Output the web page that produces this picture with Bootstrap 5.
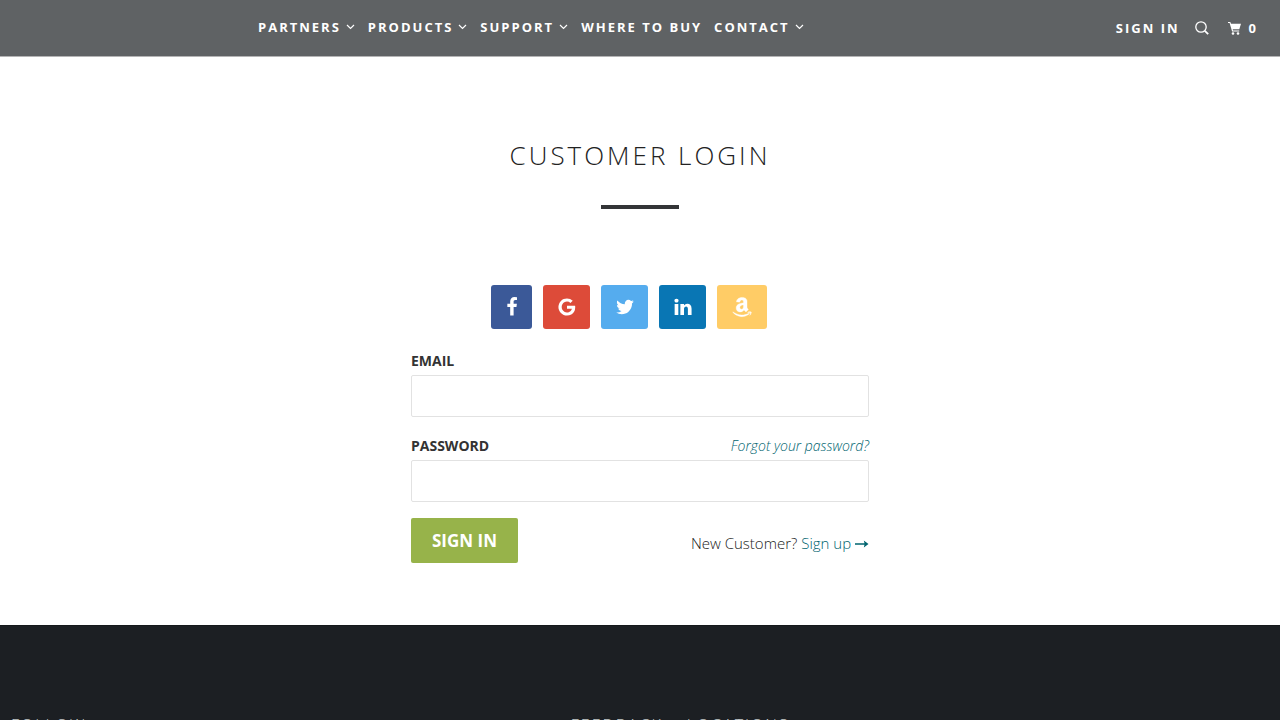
<!DOCTYPE html>
<html lang="en">
<head>
<meta charset="utf-8">
<meta name="viewport" content="width=device-width, initial-scale=1">
<title>Customer Login</title>
<link href="https://cdn.jsdelivr.net/npm/bootstrap@5.3.0/dist/css/bootstrap.min.css" rel="stylesheet">
<style>
  body { font-family: "Open Sans", sans-serif; font-size: 15px; line-height: 24px; color: #333; background: #fff; }
  a { text-decoration: none; }
  .topbar { min-height: 57px; background: #5f6264; border-bottom: 1px solid #b4b4b5; padding: 0 22px 0 20%; }
  .topbar a { color: #fff; font-size: 13px; line-height: 20px; font-weight: 700; letter-spacing: 2px; }
  .main-links { gap: 12px; padding: 0 0 2px 2px; }
  .main-links svg { margin: 0 1px 0 5px; }
  .tools { gap: 15px; }
  .page-title { font-size: 26px; line-height: 36px; font-weight: 300; letter-spacing: 3px; margin: 0; color: #222; }
  .title-rule { width: 78px; height: 4px; background: #333537; opacity: 1; border: 0; margin: 32px auto 76px; }
  .login-main { padding: 80px 16px 62px; }
  .login-form { max-width: 458px; }
  .social { gap: 11px; padding-right: 22px; margin-bottom: 20px; }
  .social-btn { height: 44px; padding: 0; border-radius: 3px; color: #fff; border: 0; }
  .fb { background: #3b5998; width: 41px; }
  .gg { background: #dd4b39; width: 47px; }
  .tw { background: #55acee; width: 47px; }
  .li { background: #0976b4; width: 47px; }
  .az { background: #ffcc66; width: 50px; }
  .field-label { font-size: 14px; font-weight: 700; }
  .field-box { height: 42px; border: 1px solid #e2e2e2; border-radius: 2px; margin-top: 2px; }
  .email-box { margin-bottom: 17px; }
  .teal { color: #00646f; }
  .forgot { font-size: 14px; font-style: italic; font-weight: 300; }
  .signin { height: 45px; width: 107px; padding: 0; border: 0; border-radius: 2px; background: #97b34a; color: #fff; font-size: 17px; font-weight: 700; }
  .signup { font-weight: 300; color: #222; }
  .signup svg { vertical-align: 1px; }
  .site-footer { background: #1c1f23; border-top: 1px solid #15181b; padding: 89px 11px 60px; }
  .site-footer h2 { font-size: 16px; line-height: 20px; font-weight: 300; letter-spacing: 2px; color: #c4caca; margin: 0; }
  .follow-col { width: 44.5%; }
  .foot-cols { gap: 24px; }
</style>
</head>
<body>
<header class="topbar d-flex align-items-center justify-content-between">
  <nav class="main-links d-flex flex-wrap" aria-label="Main">
    <a href="#" class="d-flex align-items-center">PARTNERS <svg width="9" height="6" viewBox="0 0 9 6" fill="none" stroke="#fff" stroke-width="1.2"><path d="M1 1l3.500 3.500L8 1"/></svg></a>
    <a href="#" class="d-flex align-items-center">PRODUCTS <svg width="9" height="6" viewBox="0 0 9 6" fill="none" stroke="#fff" stroke-width="1.2"><path d="M1 1l3.500 3.500L8 1"/></svg></a>
    <a href="#" class="d-flex align-items-center">SUPPORT <svg width="9" height="6" viewBox="0 0 9 6" fill="none" stroke="#fff" stroke-width="1.2"><path d="M1 1l3.500 3.500L8 1"/></svg></a>
    <a href="#">WHERE TO BUY</a>
    <a href="#" class="d-flex align-items-center">CONTACT <svg width="9" height="6" viewBox="0 0 9 6" fill="none" stroke="#fff" stroke-width="1.2"><path d="M1 1l3.500 3.500L8 1"/></svg></a>
  </nav>
  <div class="tools d-flex align-items-center">
    <a href="#">SIGN IN</a>
    <a href="#" class="d-flex me-1" aria-label="Search"><svg width="14" height="14" viewBox="0 0 14 14" fill="none" stroke="#fff"><circle cx="6" cy="6" r="5.200" stroke-width="1.300"/><path d="M9.800 9.800l3.400 3.400" stroke-width="1.800"/></svg></a>
    <a href="#" class="d-flex align-items-center gap-2" aria-label="Cart, 0 items"><svg width="13" height="13" viewBox="0 0 13 13" fill="#fff"><path d="M0 0h2.300l.7 1.700H13L11.300 7.200H4.700l.3 1.200h6.200v1.100H4.100L1.600 1.100H0z"/><circle cx="5" cy="11.500" r="1.300"/><circle cx="10" cy="11.500" r="1.300"/></svg>0</a>
  </div>
</header>

<main class="login-main">
  <h1 class="page-title text-center">CUSTOMER LOGIN</h1>
  <hr class="title-rule">
  <form class="login-form mx-auto">
    <div class="social d-flex justify-content-center">
      <button type="button" class="social-btn fb d-flex align-items-center justify-content-center" aria-label="Facebook"><svg class="flex-shrink-0" width="20" height="20" viewBox="0 0 1792 1792" fill="currentColor"><path d="M1343 12v264h-157q-86 0-116 36t-30 108v189h293l-39 296h-254v759h-306v-759h-255v-296h255v-218q0-186 104-288.500t277-102.500q147 0 228 12z"/></svg></button>
      <button type="button" class="social-btn gg d-flex align-items-center justify-content-center" aria-label="Google"><svg class="flex-shrink-0" width="20" height="20" viewBox="0 0 1792 1792" fill="currentColor"><path d="M896 786h725q12 67 12 128 0 217-91 387.500t-259.500 266.500-386.500 96q-157 0-299-60.500t-245-163.500-163.500-245-60.500-299 60.500-299 163.500-245 245-163.500 299-60.500q300 0 515 201l-209 201q-123-119-306-119-129 0-238.500 65t-173.500 176.500-64 243.500 64 243.500 173.500 176.500 238.500 65q87 0 160-24t120-60 82-82 51.500-87 22.500-78h-436v-264z"/></svg></button>
      <button type="button" class="social-btn tw d-flex align-items-center justify-content-center" aria-label="Twitter"><svg class="flex-shrink-0" width="20" height="20" viewBox="0 0 1792 1792" fill="currentColor"><path d="M1684 408q-67 98-162 167 1 14 1 42 0 130-38 259.500t-115.500 248.500-184.500 210.500-258 146-323 54.500q-271 0-496-145 35 4 78 4 225 0 401-138-105-2-188-64.500t-114-159.500q33 5 61 5 43 0 85-11-112-23-185.500-111.500t-73.500-205.500v-4q68 38 146 41-66-44-105-115t-39-154q0-88 44-163 121 149 294.500 238.500t371.500 99.500q-8-38-8-74 0-134 94.500-228.500t228.500-94.500q140 0 236 102 109-21 205-78-37 115-142 178 93-10 186-50z"/></svg></button>
      <button type="button" class="social-btn li d-flex align-items-center justify-content-center" aria-label="LinkedIn"><svg class="flex-shrink-0" width="20" height="20" viewBox="0 0 1792 1792" fill="currentColor"><path d="M477 625v991h-330v-991h330zm21-306q1 73-50.500 122t-135.500 49h-2q-82 0-132-49t-50-122q0-74 51.500-122.500t134.500-48.500 133 48.500 51 122.500zm1166 729v568h-329v-530q0-105-40.500-164.500t-126.500-59.500q-63 0-105.500 34.500t-63.500 85.500q-11 30-11 81v553h-329q2-399 2-647t-1-296l-1-48h329v144h-2q20-32 41-56t56.500-52 87-43.500 114.500-15.500q171 0 275 113.500t104 332.500z"/></svg></button>
      <button type="button" class="social-btn az d-flex align-items-center justify-content-center" aria-label="Amazon"><svg class="flex-shrink-0" width="20" height="22" viewBox="0 0 448 512" fill="currentColor" stroke="currentColor" stroke-width="8"><path d="M257.200 162.700c-48.700 1.800-169.500 15.500-169.500 117.500 0 109.500 138.300 114 183.500 43.200 6.500 10.200 35.400 37.500 45.300 46.800l56.800-56S341 288.900 341 261.400V114.300C341 89 316.500 32 228.700 32 140.700 32 94 87 94 136.300l73.500 6.800c16.300-49.500 54.200-49.500 54.200-49.500 40.700-.1 35.500 29.800 35.500 69.100zm0 86.800c0 80-84.200 68-84.200 17.200 0-47.200 50.500-56.700 84.200-57.800v40.600zm136 163.500c-7.700 10-70 67-174.500 67S34.200 408.500 9.700 379c-6.800-7.700 1-11.300 5.500-8.300C88.500 415.200 203 488.500 387.700 401c7.500-3.700 13.300 2 5.500 12zm39.800 2.200c-6.500 15.800-16 26.800-21.200 31-5.500 4.500-9.500 2.700-6.500-3.800s19.300-46.500 12.700-55c-6.500-8.300-37-4.300-48-3.200-10.800 1-13 2-14-.3-2.300-5.700 21.700-15.500 37.500-17.500 15.700-1.800 41-.8 46 5.700 3.700 5.100 0 27.100-6.500 43.100z"/></svg></button>
    </div>
    <label for="email" class="field-label d-block">EMAIL</label>
    <input type="email" id="email" class="field-box email-box form-control">
    <div class="d-flex justify-content-between">
      <label for="password" class="field-label">PASSWORD</label>
      <a href="#" class="teal forgot">Forgot your password?</a>
    </div>
    <input type="password" id="password" class="field-box form-control mb-3">
    <div class="d-flex justify-content-between align-items-center">
      <button type="submit" class="signin">SIGN IN</button>
      <span class="signup pt-1">New Customer? <a href="#" class="teal">Sign up <svg width="14" height="8" viewBox="0 0 14 8" fill="currentColor"><path d="M0 3.200h9.500L8.800.6 13.500 4 8.800 7.400l.7-2.600H0z"/></svg></a></span>
    </div>
  </form>
</main>

<footer class="site-footer d-flex">
  <div class="follow-col flex-shrink-0"><h2>FOLLOW</h2></div>
  <div class="foot-cols d-flex">
    <h2>FEEDBACK</h2>
    <h2>LOCATIONS</h2>
  </div>
</footer>
<script src="https://cdn.jsdelivr.net/npm/bootstrap@5.3.0/dist/js/bootstrap.bundle.min.js"></script>
</body>
</html>
